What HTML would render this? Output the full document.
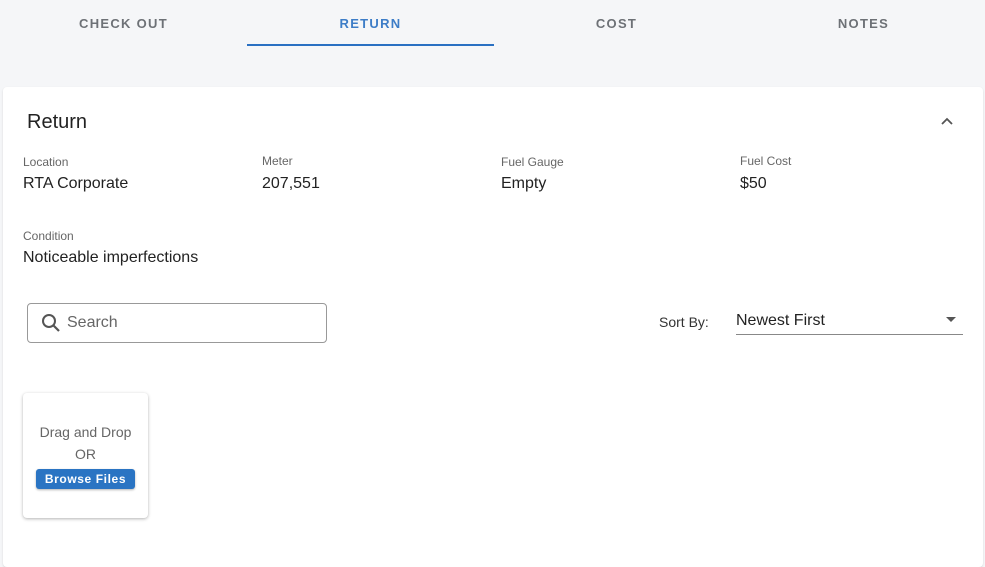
<!DOCTYPE html>
<html><head><style>
*{box-sizing:border-box;margin:0;padding:0}
body{width:985px;height:553px;background:#f5f6f8;font-family:"Liberation Sans",sans-serif;position:relative;overflow:hidden;color:#222}
.tab{position:absolute;top:16px;width:247px;text-align:center;font-size:13px;letter-spacing:1.3px;color:#5f6368;font-weight:bold;opacity:.9}
.card{position:absolute;left:3px;top:87px;width:980px;height:480px;background:#fff;border-radius:4px;box-shadow:0 1px 2px rgba(0,0,0,.12)}
.a{position:absolute}
.lbl{font-size:12px;color:#666}
.val{font-size:16px;color:#222}
</style></head><body>
<div class="tab" style="left:0">CHECK OUT</div>
<div class="tab" style="left:247px;color:#2a70c2">RETURN</div>
<div class="a" style="left:247px;top:44px;width:247px;height:2px;background:#2a70c2"></div>
<div class="tab" style="left:493px">COST</div>
<div class="tab" style="left:740px">NOTES</div>
<div class="card"></div>
<div class="a" style="left:27px;top:111px;font-size:20px;color:#222">Return</div>
<svg class="a" style="left:938px;top:114px" width="18" height="14" viewBox="0 0 18 14"><path d="M4 10 L9 5 L14 10" fill="none" stroke="#555" stroke-width="1.8"/></svg>
<div class="a lbl" style="left:23px;top:155px">Location</div><div class="a val" style="left:23px;top:175px">RTA Corporate</div>
<div class="a lbl" style="left:262px;top:154px">Meter</div><div class="a val" style="left:262px;top:175px">207,551</div>
<div class="a lbl" style="left:501px;top:155px">Fuel Gauge</div><div class="a val" style="left:501px;top:175px">Empty</div>
<div class="a lbl" style="left:740px;top:154px">Fuel Cost</div><div class="a val" style="left:740px;top:175px">$50</div>
<div class="a lbl" style="left:23px;top:229px">Condition</div><div class="a val" style="left:23px;top:249px">Noticeable imperfections</div>
<div class="a" style="left:27px;top:303px;width:300px;height:40px;border:1px solid #999;border-radius:4px"></div>
<svg class="a" style="left:40px;top:312px" width="22" height="22" viewBox="0 0 22 22"><circle cx="9" cy="9" r="6" fill="none" stroke="#555" stroke-width="2"/><path d="M13.5 13.5 L19 19" stroke="#555" stroke-width="2.2"/></svg>
<div class="a" style="left:67px;top:314px;font-size:16px;color:#666">Search</div>
<div class="a" style="left:659px;top:314px;font-size:14px;color:#333">Sort By:</div>
<div class="a" style="left:736px;top:312px;font-size:16px;color:#222">Newest First</div>
<svg class="a" style="left:944px;top:315px" width="14" height="10"><path d="M2 2 L12 2 L7 7Z" fill="#555"/></svg>
<div class="a" style="left:736px;top:334px;width:227px;height:1px;background:#888"></div>
<div class="a" style="left:23px;top:393px;width:125px;height:125px;background:#fff;border-radius:4px;box-shadow:0 1px 3px rgba(0,0,0,.3)"></div>
<div class="a" style="left:23px;top:424px;width:125px;text-align:center;font-size:14px;color:#666">Drag and Drop</div>
<div class="a" style="left:23px;top:446px;width:125px;text-align:center;font-size:14px;color:#666">OR</div>
<div class="a" style="left:36px;top:469px;width:99px;height:20px;background:#2a74c3;border-radius:3px;color:#fff;font-size:12px;font-weight:bold;letter-spacing:.6px;text-align:center;line-height:20px;box-shadow:0 1px 2px rgba(0,0,0,.3)">Browse Files</div>
</body></html>
